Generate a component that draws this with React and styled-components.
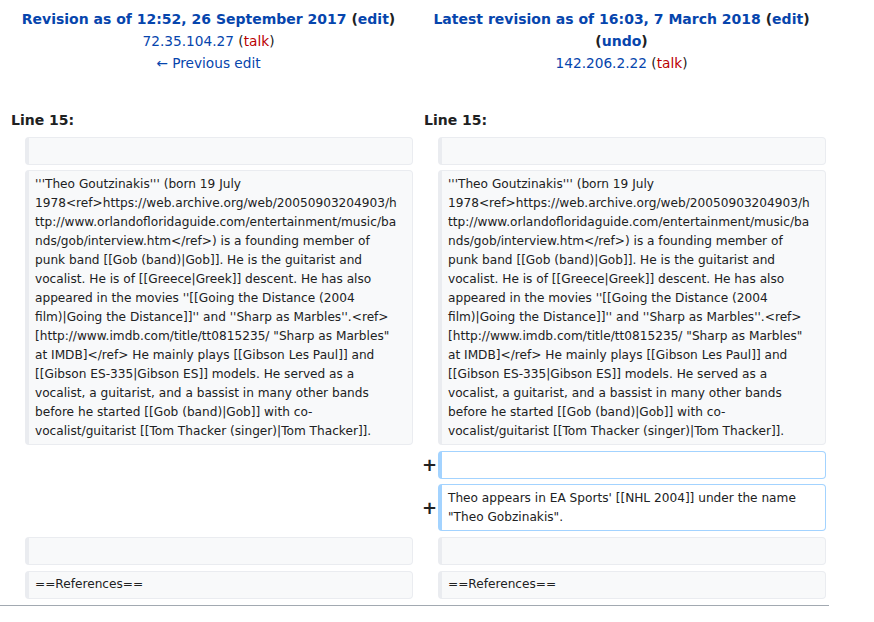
import React from "react";
import styled, { createGlobalStyle } from "styled-components";

const Global = createGlobalStyle`
  html, body { margin: 0; padding: 0; background: #fff; }
  body { font-family: "DejaVu Sans", "Liberation Sans", sans-serif; color: #202122; }
`;

const Page = styled.div`
  width: 830px;
  padding-top: 8px;
`;

const Titles = styled.div`
  display: grid;
  grid-template-columns: 1fr 1fr;
  column-gap: 4px;
  padding: 0 4px;
`;

const TitleCell = styled.div`
  text-align: center;
  font-size: 13.7px;
  line-height: 22px;
`;

const TitleLine = styled.div`
  font-weight: ${(p) => (p.$bold ? "bold" : "normal")};
  font-size: ${(p) => (p.$big ? "14px" : "13.7px")};
`;

const Link = styled.a`
  color: ${(p) => (p.$red ? "#ba0000" : "#0645ad")};
  text-decoration: none;
  cursor: pointer;
`;

const Grid = styled.div`
  display: grid;
  grid-template-columns: 17px 388px 17px 388px;
  column-gap: 4px;
  row-gap: 5.6px;
  padding: 0 4px;
  margin-top: 35px;
`;

const LineNo = styled.div`
  grid-column: span 2;
  font-weight: bold;
  font-size: 14px;
  line-height: 22px;
  padding-left: 7px;
`;

const Marker = styled.div`
  display: flex;
  align-items: center;
  justify-content: flex-end;
  margin-right: -3px;
  font-weight: bold;
  font-size: 18px;
  color: #202122;
`;

const Box = styled.div`
  box-sizing: border-box;
  font-size: 12.15px;
  line-height: 19px;
  padding: 3.5px 6px;
  border: 1px solid ${(p) => (p.$added ? "#a3d3ff" : "#eaecf0")};
  border-left: 4px solid ${(p) => (p.$added ? "#a3d3ff" : "#eaecf0")};
  border-radius: 4px;
  background: ${(p) => (p.$added ? "#ffffff" : "#f8f9fa")};
  min-height: 28px;
  color: #202122;
`;

const Empty = styled.div``;

const Line = styled.div`
  white-space: nowrap;
`;

const Rule = styled.div`
  margin-top: 6px;
  height: 1px;
  width: 829px;
  background: #a2a9b1;
`;

const para = [
  "'''Theo Goutzinakis''' (born 19 July",
  "1978<ref>https://web.archive.org/web/20050903204903/h",
  "ttp://www.orlandofloridaguide.com/entertainment/music/ba",
  "nds/gob/interview.htm</ref>) is a founding member of",
  "punk band [[Gob (band)|Gob]]. He is the guitarist and",
  "vocalist. He is of [[Greece|Greek]] descent. He has also",
  "appeared in the movies ''[[Going the Distance (2004",
  "film)|Going the Distance]]'' and ''Sharp as Marbles''.<ref>",
  "[http://www.imdb.com/title/tt0815235/ \"Sharp as Marbles\"",
  "at IMDB]</ref> He mainly plays [[Gibson Les Paul]] and",
  "[[Gibson ES-335|Gibson ES]] models. He served as a",
  "vocalist, a guitarist, and a bassist in many other bands",
  "before he started [[Gob (band)|Gob]] with co-",
  "vocalist/guitarist [[Tom Thacker (singer)|Tom Thacker]].",
];

const added = [
  "Theo appears in EA Sports' [[NHL 2004]] under the name",
  "\"Theo Gobzinakis\".",
];

const Text = ({ lines }) => (
  <>
    {lines.map((l, i) => (
      <Line key={i}>{l}</Line>
    ))}
  </>
);

export default function App() {
  return (
    <>
      <Global />
      <Page>
        <Titles>
          <TitleCell>
            <TitleLine $bold $big>
              <Link>Revision as of 12:52, 26 September 2017</Link> (<Link>edit</Link>)
            </TitleLine>
            <TitleLine>
              <Link>72.35.104.27</Link> (<Link $red>talk</Link>)
            </TitleLine>
            <TitleLine>
              <Link>← Previous edit</Link>
            </TitleLine>
          </TitleCell>
          <TitleCell>
            <TitleLine $bold $big>
              <Link>Latest revision as of 16:03, 7 March 2018</Link> (<Link>edit</Link>)
            </TitleLine>
            <TitleLine $bold $big>
              (<Link>undo</Link>)
            </TitleLine>
            <TitleLine>
              <Link>142.206.2.22</Link> (<Link $red>talk</Link>)
            </TitleLine>
          </TitleCell>
        </Titles>
        <Grid>
          <LineNo>Line 15:</LineNo>
          <LineNo>Line 15:</LineNo>

          <Marker />
          <Box />
          <Marker />
          <Box />

          <Marker />
          <Box>
            <Text lines={para} />
          </Box>
          <Marker />
          <Box>
            <Text lines={para} />
          </Box>

          <Marker />
          <Empty />
          <Marker>+</Marker>
          <Box $added />

          <Marker />
          <Empty />
          <Marker>+</Marker>
          <Box $added>
            <Text lines={added} />
          </Box>

          <Marker />
          <Box />
          <Marker />
          <Box />

          <Marker />
          <Box>==References==</Box>
          <Marker />
          <Box>==References==</Box>
        </Grid>
        <Rule />
      </Page>
    </>
  );
}
